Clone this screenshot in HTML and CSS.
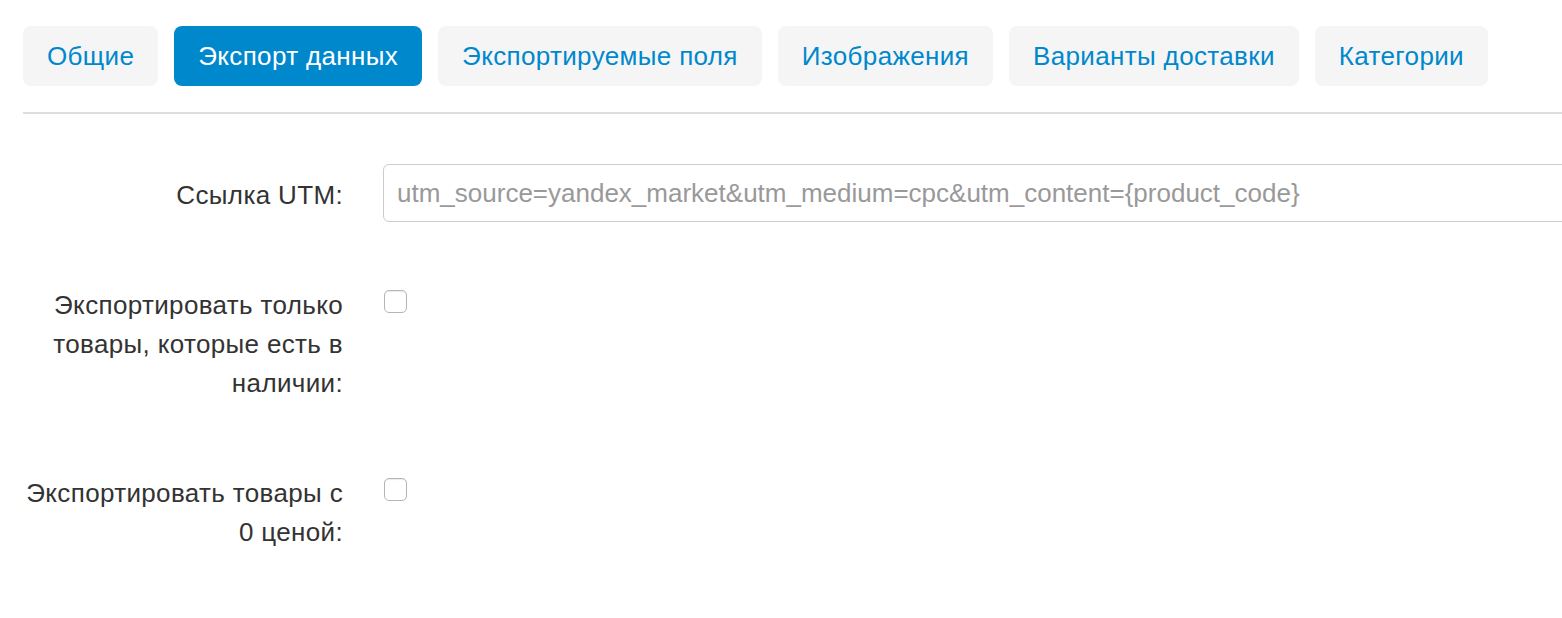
FILE: index.html
```html
<!DOCTYPE html>
<html lang="ru">
<head>
<meta charset="utf-8">
<title>Экспорт данных</title>
<link rel="stylesheet" href="styles.css">
</head>
<body>
<div class="page">
  <nav class="tabs">
    <a class="tab" href="#">Общие</a>
    <a class="tab active" href="#">Экспорт данных</a>
    <a class="tab" href="#">Экспортируемые поля</a>
    <a class="tab" href="#">Изображения</a>
    <a class="tab" href="#">Варианты доставки</a>
    <a class="tab" href="#">Категории</a>
  </nav>
  <hr class="divider">
  <form class="form">
    <div class="group">
      <label class="label" for="utm">Ссылка UTM:</label>
      <div class="control">
        <input class="input" id="utm" type="text" placeholder="utm_source=yandex_market&amp;utm_medium=cpc&amp;utm_content={product_code}">
      </div>
    </div>
    <div class="group">
      <label class="label" for="instock">Экспортировать только товары, которые есть в наличии:</label>
      <div class="control check">
        <input class="checkbox" id="instock" type="checkbox">
      </div>
    </div>
    <div class="group">
      <label class="label" for="zero">Экспортировать товары с 0 ценой:</label>
      <div class="control check">
        <input class="checkbox" id="zero" type="checkbox">
      </div>
    </div>
  </form>
</div>
</body>
</html>
```
FILE: styles.css
```css
html, body {
  margin: 0;
  padding: 0;
  background: #fff;
  overflow: hidden;
}
body {
  font-family: "Liberation Sans", Arial, sans-serif;
  font-size: 26px;
  letter-spacing: 0.35px;
  line-height: 39px;
  color: #333;
}
.page {
  width: 1640px;
  padding: 26px 0 0 23px;
}
.tabs {
  display: flex;
  gap: 16px;
}
.tab {
  display: block;
  padding: 10.5px 24px;
  background: #f5f5f5;
  color: #0088cc;
  text-decoration: none;
  border-radius: 8px;
}
.tab.active {
  background: #0088cc;
  color: #fff;
}
.divider {
  margin: 26px 0 0 0;
  border: 0;
  height: 2px;
  background: #ddd;
}
.form {
  padding-top: 50px;
}
.group {
  display: flex;
  gap: 40px;
  margin-bottom: 47px;
}
.label {
  width: 320px;
  flex: none;
  text-align: right;
  padding: 12px 0;
  box-sizing: border-box;
}
.control {
  flex: 1;
}
.input {
  display: block;
  width: 100%;
  box-sizing: border-box;
  height: 58px;
  padding: 0 13px;
  border: 1px solid #ccc;
  border-radius: 6px;
  font: inherit;
  color: #555;
  outline: none;
}
.input::placeholder {
  color: #999;
}
.check {
  padding-top: 16px;
}
.checkbox {
  appearance: none;
  -webkit-appearance: none;
  display: block;
  margin: 0 0 0 1px;
  width: 23px;
  height: 23px;
  border: 1px solid #b5b5b5;
  border-radius: 5px;
  background: #fff;
  box-shadow: inset 0 1px 1px rgba(0,0,0,0.08);
  box-sizing: border-box;
}
```
